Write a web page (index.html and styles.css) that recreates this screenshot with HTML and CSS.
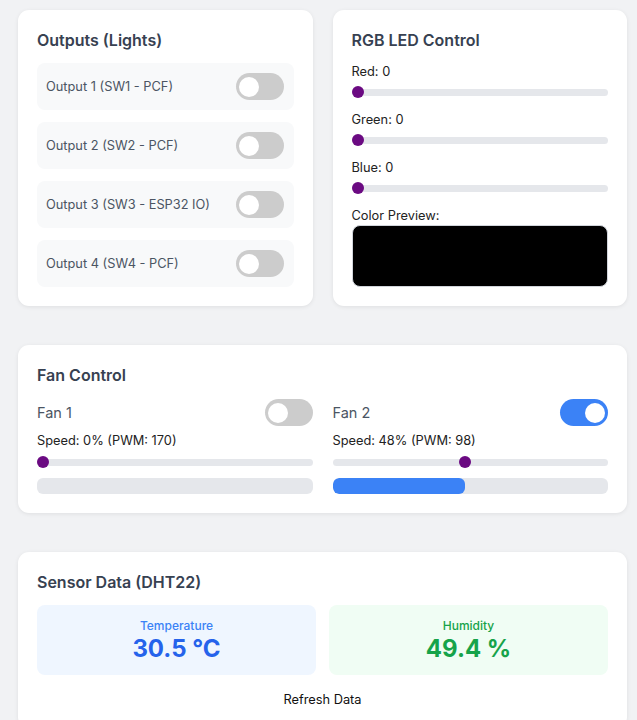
FILE: index.html
```html
<!DOCTYPE html>
<html lang="en">
<head>
<meta charset="utf-8">
<title>ESP32 Control</title>
<link rel="stylesheet" href="styles.css">
</head>
<body>
<div class="page">
  <div class="grid2">
    <section class="card">
      <h2 class="card-title">Outputs (Lights)</h2>
      <div class="outputs">
        <div class="out-row"><span class="out-label">Output 1 (SW1 - PCF)</span><span class="toggle"><span class="knob"></span></span></div>
        <div class="out-row"><span class="out-label">Output 2 (SW2 - PCF)</span><span class="toggle"><span class="knob"></span></span></div>
        <div class="out-row"><span class="out-label">Output 3 (SW3 - ESP32 IO)</span><span class="toggle"><span class="knob"></span></span></div>
        <div class="out-row"><span class="out-label">Output 4 (SW4 - PCF)</span><span class="toggle"><span class="knob"></span></span></div>
      </div>
    </section>
    <section class="card">
      <h2 class="card-title">RGB LED Control</h2>
      <div class="rgb">
        <div class="rgb-item"><div class="lbl">Red: 0</div><div class="slider"><span class="thumb" style="--v:0"></span></div></div>
        <div class="rgb-item"><div class="lbl">Green: 0</div><div class="slider"><span class="thumb" style="--v:0"></span></div></div>
        <div class="rgb-item"><div class="lbl">Blue: 0</div><div class="slider"><span class="thumb" style="--v:0"></span></div></div>
        <div class="preview-wrap"><div class="lbl">Color Preview:</div><div class="preview"></div></div>
      </div>
    </section>
  </div>

  <section class="card fan-card">
    <h2 class="card-title">Fan Control</h2>
    <div class="fans">
      <div class="fan">
        <div class="fan-head"><span class="fan-name">Fan 1</span><span class="toggle"><span class="knob"></span></span></div>
        <div class="speed">Speed: 0% (PWM: 170)</div>
        <div class="slider"><span class="thumb" style="--v:0"></span></div>
        <div class="bar"><div class="bar-fill" style="width:0%"></div></div>
      </div>
      <div class="fan">
        <div class="fan-head"><span class="fan-name">Fan 2</span><span class="toggle on"><span class="knob"></span></span></div>
        <div class="speed">Speed: 48% (PWM: 98)</div>
        <div class="slider"><span class="thumb" style="--v:0.48"></span></div>
        <div class="bar"><div class="bar-fill" style="width:48%"></div></div>
      </div>
    </div>
  </section>

  <section class="card sensor-card">
    <h2 class="card-title">Sensor Data (DHT22)</h2>
    <div class="sensors">
      <div class="sensor temp"><div class="s-label">Temperature</div><div class="s-value">30.5 °C</div></div>
      <div class="sensor hum"><div class="s-label">Humidity</div><div class="s-value">49.4 %</div></div>
    </div>
    <div class="refresh"><button class="refresh-btn">Refresh Data</button></div>
  </section>
</div>
</body>
</html>
```
FILE: styles.css
```css
* { box-sizing: border-box; }
html, body { margin: 0; padding: 0; }
body {
  background: #f1f2f4;
  font-family: Inter, "Noto Sans", "Liberation Sans", sans-serif;
  color: #222;
}
.page {
  padding: 10px 10px 0 18px;
}
.grid2 {
  display: grid;
  grid-template-columns: 1fr 1fr;
  gap: 20px;
  margin-bottom: 39px;
}
.card {
  background: #fff;
  border-radius: 11px;
  box-shadow: 0 1px 4px rgba(0,0,0,0.08);
  padding: 19px;
}
.card-title {
  margin: 0 0 12px 0;
  font-size: 16px;
  line-height: 22px;
  font-weight: 600;
  color: #374151;
}
.outputs { display: flex; flex-direction: column; gap: 12px; }
.out-row {
  display: flex;
  align-items: center;
  justify-content: space-between;
  height: 47px;
  background: #f8f9fa;
  border-radius: 8px;
  padding: 0 10px 0 9px;
}
.out-label { font-size: 12.8px; color: #4b5563; }
.toggle {
  position: relative;
  display: inline-block;
  width: 48px;
  height: 27px;
  border-radius: 14px;
  background: #cccccc;
  flex: none;
}
.toggle .knob {
  position: absolute;
  left: 3.5px;
  top: 3.5px;
  width: 20px;
  height: 20px;
  border-radius: 50%;
  background: #fff;
}
.toggle.on { background: #3b82f6; }
.toggle.on .knob { left: auto; right: 3.5px; }

.rgb { display: flex; flex-direction: column; margin-top: 1px; }
.rgb-item { margin-bottom: 13px; }
.lbl { font-size: 12.8px; line-height: 18px; color: #222; margin-bottom: 5px; }
.slider {
  position: relative;
  height: 12px;
}
.slider::before {
  content: "";
  position: absolute;
  left: 0; right: 0; top: 3px;
  height: 6.5px;
  border-radius: 4px;
  background: #e5e7eb;
}
.slider .thumb {
  position: absolute;
  top: 0;
  left: calc(var(--v) * (100% - 12px));
  width: 12px;
  height: 12px;
  border-radius: 50%;
  background: #6b0a82;
}
.preview-wrap .lbl { margin-bottom: 0; }
.preview {
  height: 62px;
  background: #000;
  border: 1px solid #d1d5db;
  border-radius: 8px;
}

.fan-card { margin-bottom: 39px; }
.fans {
  display: grid;
  grid-template-columns: 1fr 1fr;
  gap: 20px;
}
.fan-head {
  display: flex;
  justify-content: space-between;
  align-items: center;
  margin-top: 1px;
  margin-bottom: 6px;
}
.fan-name { font-size: 14.5px; color: #4b5563; }
.speed { font-size: 12.8px; line-height: 18px; color: #222; margin-bottom: 6px; }
.bar {
  margin-top: 10px;
  height: 16px;
  border-radius: 6px;
  background: #e5e7eb;
  overflow: hidden;
}
.bar-fill { height: 100%; background: #3b82f6; border-radius: 6px; }

.sensors {
  display: grid;
  grid-template-columns: 1fr 1fr;
  gap: 13px;
}
.sensor {
  border-radius: 8px;
  height: 70px;
  padding-top: 13px;
  text-align: center;
}
.s-label { font-size: 12px; line-height: 16px; font-weight: 500; }
.s-value { font-size: 24px; line-height: 30px; font-weight: 700; }
.temp { background: #eff6ff; }
.temp .s-label { color: #3b82f6; }
.temp .s-value { color: #2563eb; }
.hum { background: #f0fdf4; }
.hum .s-label { color: #16a34a; }
.hum .s-value { color: #16a34a; }
.refresh { text-align: center; margin-top: 13px; }
.refresh-btn {
  font-family: inherit;
  font-size: 12.8px;
  background: transparent;
  border: none;
  color: #111;
  padding: 2px 6px;
}
```
